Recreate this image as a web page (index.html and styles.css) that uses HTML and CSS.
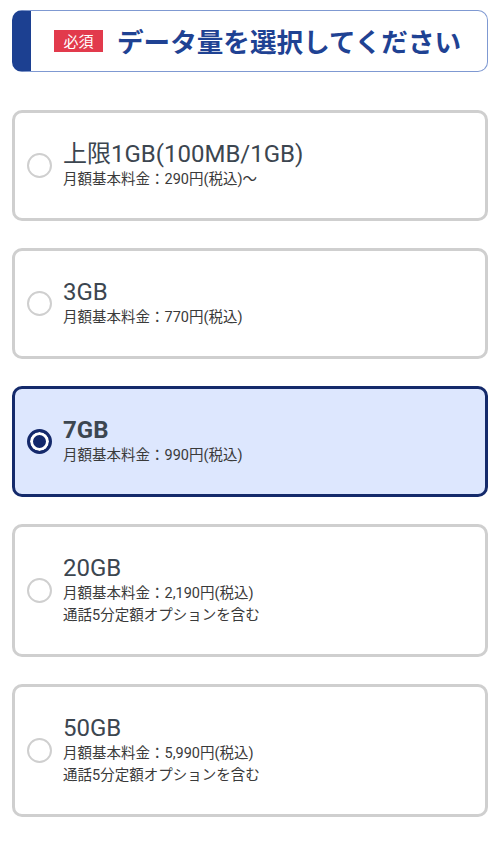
FILE: index.html
```html
<!DOCTYPE html>
<html lang="ja">
<head>
<meta charset="utf-8">
<link rel="stylesheet" href="styles.css">
</head>
<body>
<div class="page">
  <div class="heading">
    <span class="badge">必須</span>
    <span class="heading-text">データ量を選択してください</span>
  </div>
  <div class="options">
    <div class="option">
      <span class="radio"></span>
      <div class="info">
        <div class="title">上限1GB(100MB/1GB)</div>
        <div class="sub">月額基本料金：290円(税込)〜</div>
      </div>
    </div>
    <div class="option">
      <span class="radio"></span>
      <div class="info">
        <div class="title">3GB</div>
        <div class="sub">月額基本料金：770円(税込)</div>
      </div>
    </div>
    <div class="option selected">
      <span class="radio"></span>
      <div class="info">
        <div class="title">7GB</div>
        <div class="sub">月額基本料金：990円(税込)</div>
      </div>
    </div>
    <div class="option">
      <span class="radio"></span>
      <div class="info">
        <div class="title">20GB</div>
        <div class="sub">月額基本料金：2,190円(税込)</div>
        <div class="sub">通話5分定額オプションを含む</div>
      </div>
    </div>
    <div class="option">
      <span class="radio"></span>
      <div class="info">
        <div class="title">50GB</div>
        <div class="sub">月額基本料金：5,990円(税込)</div>
        <div class="sub">通話5分定額オプションを含む</div>
      </div>
    </div>
  </div>
</div>
</body>
</html>
```
FILE: styles.css
```css
html, body {
  margin: 0;
  padding: 0;
  background: #ffffff;
}
body {
  font-family: Roboto, "Noto Sans CJK JP", sans-serif;
  color: #333333;
}
.page {
  padding: 10px 12px;
}
.heading {
  box-sizing: border-box;
  height: 62px;
  border: 1px solid #7f99d2;
  border-left: 19px solid #1c4091;
  border-radius: 10px;
  display: flex;
  align-items: center;
  padding-left: 23px;
  gap: 14px;
}
.badge {
  background: #e23a4c;
  color: #ffffff;
  font-family: "Noto Sans CJK JP", sans-serif;
  font-size: 15px;
  line-height: 22px;
  height: 22px;
  padding: 0 4px;
  width: 41px;
  text-align: center;
}
.heading-text {
  font-family: "Noto Sans CJK JP", sans-serif;
  font-weight: 700;
  font-size: 26.6px;
  color: #1f4293;
  line-height: 1;
}
.options {
  margin-top: 38px;
  display: flex;
  flex-direction: column;
  gap: 27px;
}
.option {
  border: 3px solid #cfcfcf;
  border-radius: 10px;
  padding: 27px 12px;
  display: flex;
  align-items: center;
  gap: 11px;
  background: #ffffff;
}
.radio {
  box-sizing: border-box;
  width: 25px;
  height: 25px;
  border: 2px solid #cfcfcf;
  border-radius: 50%;
  flex: none;
  background: #ffffff;
}
.title {
  font-size: 24px;
  line-height: 29px;
  color: #3c4650;
}
.sub {
  font-size: 14.5px;
  line-height: 22px;
  color: #3a3a3a;
}
.option.selected {
  background: #dde7fe;
  border-color: #142a6b;
}
.option.selected .title {
  font-weight: 700;
}
.option.selected .radio {
  border: 3px solid #14296b;
  box-shadow: inset 0 0 0 3px #ffffff;
  background: #14296b;
}
```
